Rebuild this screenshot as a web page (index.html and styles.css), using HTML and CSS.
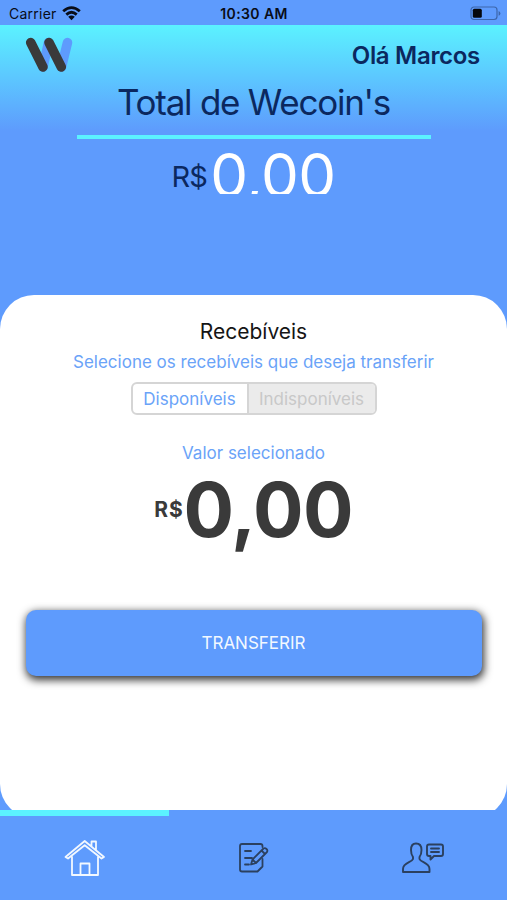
FILE: index.html
```html
<!DOCTYPE html>
<html lang="pt-BR">
<head>
<meta charset="utf-8">
<title>Wecoin</title>
<link rel="stylesheet" href="styles.css">
</head>
<body>
<div class="app">
  <div class="status">
    <div class="carrier"><span>Carrier</span>
      <svg width="19" height="15" viewBox="0 0 19 15" fill="none" stroke="#090d18" stroke-width="2.8"><path d="M1.2 5.3Q9.500-2 17.800 5.300M4.300 8.600Q9.500 4 14.700 8.600"/><path d="M6.200 10.800Q9.500 8 12.800 10.800L9.500 14.200Z" fill="#090d18" stroke="none"/></svg>
    </div>
    <span class="time">10:30 AM</span>
    <svg class="battery" width="31" height="15" viewBox="0 0 31 15"><rect x="1" y="1" width="26" height="12.500" rx="3" fill="none" stroke="#3c66ab" stroke-width="1.2"/><rect x="2.800" y="2.800" width="9" height="9" rx="1.500" fill="#05070c"/><path d="M28.600 5v4.800q1.800-.6 1.800-2.400T28.600 5" fill="#3c66ab"/></svg>
  </div>
  <header class="hero">
    <div class="topbar">
      <svg width="48" height="36" viewBox="0 0 48 36" fill="none" stroke-width="9.500" stroke-linecap="round"><path d="M18 30 23.500 5.500M36.500 30 42.500 5.500" stroke="#5e9bfd"/><path d="M5.700 5.500 18 30M24 5.500 36.300 30" stroke="#3a3a3a"/></svg>
      <span class="hello">Olá Marcos</span>
    </div>
    <h1 class="title">Total de Wecoin's</h1>
    <div class="rule"></div>
    <div class="balance"><span class="cur">R$</span><span class="amount">0,00</span></div>
  </header>
  <main class="sheet-area">
    <section class="sheet">
      <h2 class="heading">Recebíveis</h2>
      <p class="hint">Selecione os recebíveis que deseja transferir</p>
      <div class="segment"><span class="seg on">Disponíveis</span><span class="seg off">Indisponíveis</span></div>
      <p class="label">Valor selecionado</p>
      <div class="value"><span class="vcur">R$</span><span class="vnum">0,00</span></div>
      <button class="transfer"><span>TRANSFERIR</span></button>
    </section>
  </main>
  <nav class="tabs">
    <div class="tab active">
      <svg width="42" height="38" viewBox="0 0 42 38" fill="none" stroke="#f2f8ff" stroke-width="1.8" stroke-linejoin="round" stroke-linecap="round"><path d="M8 18V36H34V18M16.500 36V24.500H25.500V36M1.500 18 20.700 2 40 18 37.500 19.500 20.700 6.200 4 19.500ZM27.500 7V2.500H32V11"/></svg>
    </div>
    <div class="tab">
      <svg width="32" height="32" viewBox="0 0 32 32" fill="none" stroke="#2b405f" stroke-width="1.8" stroke-linejoin="round" stroke-linecap="round"><path d="M24.500 5V4Q24.500 2 22.500 2H4Q2 2 2 4V27.500Q2 29.500 4 29.500H19.500L24.500 24.500V17M7 9H13M7 16H14M7 22.500H11"/><path d="M13 22.500 14.500 17.500 25.500 6.500Q27 5.500 28.500 7T29 10L18 21ZM14.500 17.500 18 21M23.500 8.500 27 12"/></svg>
    </div>
    <div class="tab">
      <svg width="44" height="34" viewBox="0 0 44 34" fill="none" stroke="#2b405f" stroke-width="1.900" stroke-linejoin="round" stroke-linecap="round"><path d="M10 9C10 4.500 12 2.500 15 2.500S20.500 4.500 20.500 9C20.500 12 20 14 18.500 16V18C19.500 21.500 28.500 21.500 28.500 28V31H2V28C2 21.500 11 21.500 12 18V16C10.500 14 10 12 10 9Z"/><path d="M28 3.500H40Q42 3.500 42 5.500V13Q42 15 40 15H33L29.500 18.500V15H28Q26 15 26 13V5.500Q26 3.500 28 3.500ZM30 7.500H38M30 11H38"/></svg>
    </div>
  </nav>
</div>
</body>
</html>
```
FILE: styles.css
```css
* { box-sizing: border-box; }
body { margin: 0; font-family: Inter, "Liberation Sans", sans-serif; }
h1, h2, p { margin: 0; font-weight: 400; }
svg { display: block; flex: none; }
.app { width: 507px; height: 900px; display: flex; flex-direction: column; background: #5e9bfd; overflow: hidden; white-space: nowrap; }
.status { height: 25px; display: grid; grid-template-columns: 1fr auto 1fr; align-items: center; padding: 2px 6px 0 9px; color: #090d18; }
.carrier { display: flex; align-items: center; gap: 5px; font-size: 14px; letter-spacing: .25px; }
.time { font-size: 14px; font-weight: 600; letter-spacing: .4px; margin-right: 2px; }
.battery { justify-self: end; }
.hero { height: 270px; display: flex; flex-direction: column; align-items: center; background: linear-gradient(#5bf2ff 0, #5cc6ff 54px, #5e9bfd 106px); color: #0b285f; }
.topbar { align-self: stretch; height: 60px; display: flex; justify-content: space-between; align-items: center; padding: 0 27px 0 25px; }
.hello { font-size: 24px; font-weight: 600; letter-spacing: -.3px; }
.title { height: 50px; line-height: 35px; font-size: 35px; letter-spacing: -1.25px; }
.rule { width: 354px; height: 4px; background: #5bf2ff; }
.balance { height: 55px; display: flex; justify-content: center; overflow: hidden; }
.cur { margin-right: 3px; font-size: 29px; line-height: 75px; letter-spacing: -.8px; }
.amount { font-size: 60px; line-height: 72px; font-weight: 400; letter-spacing: -.6px; color: #fff; }
.sheet-area { height: 515px; overflow: hidden; }
.sheet { height: 523px; padding-top: 22px; border-radius: 34px; background: #fff; display: flex; flex-direction: column; align-items: center; }
.heading { height: 29px; line-height: 29px; font-size: 21px; color: #151515; }
.hint { height: 36px; line-height: 32px; font-size: 17px; color: #6aa3f8; }
.segment { width: 246px; height: 33px; display: flex; border: 2px solid #d5d5d5; border-radius: 6px; overflow: hidden; font-size: 17px; line-height: 31px; text-align: center; }
.seg.on { width: 114px; color: #6aa3f8; }
.seg.off { flex: 1; background: #ebebeb; border-left: 2px solid #d5d5d5; color: #c8c8c8; }
.label { margin-top: 24px; height: 28px; line-height: 29px; font-size: 17px; color: #6aa3f8; }
.value { height: 92px; display: flex; justify-content: center; color: #3a3a3a; font-weight: 700; }
.vcur { font-size: 21px; line-height: 85px; letter-spacing: .8px; }
.vnum { font-size: 75px; line-height: 85px; letter-spacing: -.8px; }
.transfer { width: 456px; height: 66px; margin-top: 51px; border: 0; border-radius: 10px; background: #5e9bfd; color: #f2f8ff; font: 400 17px Inter, sans-serif; box-shadow: 1px 3px 8px 1px #000c; }
.tabs { height: 90px; display: grid; grid-template-columns: repeat(3, 1fr); }
.tab { display: flex; align-items: center; justify-content: center; border-top: 6px solid transparent; }
.tab.active { border-color: #5bf2ff; }
```
